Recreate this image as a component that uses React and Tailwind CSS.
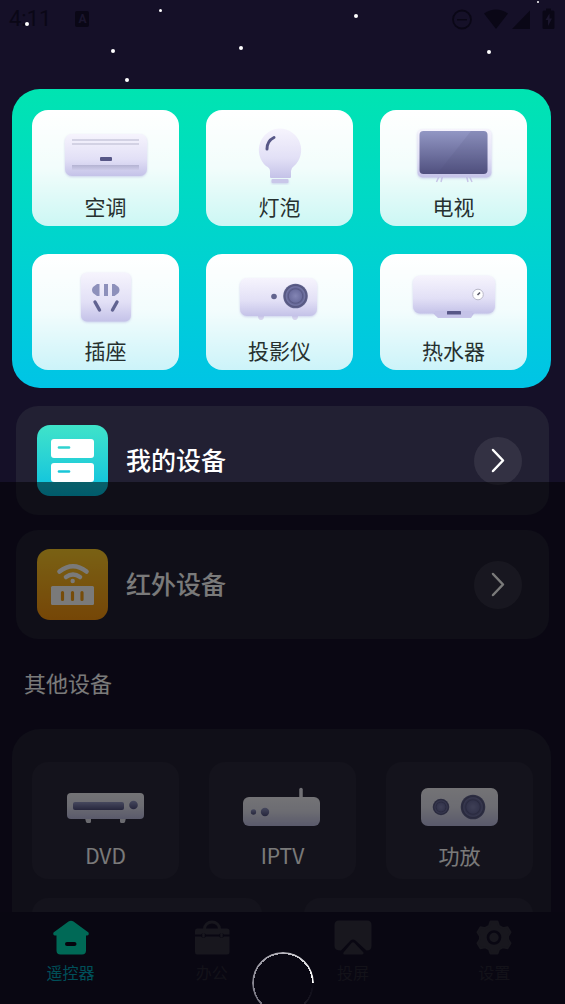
import React from "react";

const stars = [
  "left-[25px] top-[22px] size-1",
  "left-[159px] top-[9px] size-[3px]",
  "left-[111px] top-[49px] size-1",
  "left-[125px] top-[78px] size-1",
  "left-[239px] top-[46px] size-1",
  "left-[354px] top-[14px] size-1",
  "left-[487px] top-[50px] size-1",
  "left-[537px] top-[1px] size-[2px]",
];

function Defs() {
  return (
    <svg className="absolute size-0" aria-hidden="true">
      <defs>
        <linearGradient id="shell" x1="0" y1="0" x2="0" y2="1">
          <stop offset="0" stopColor="#f6f4fd" />
          <stop offset="0.6" stopColor="#e2e0f6" />
          <stop offset="1" stopColor="#c4c2e8" />
        </linearGradient>
        <linearGradient id="chrome" x1="0" y1="0" x2="0" y2="1">
          <stop offset="0" stopColor="#f2f1f6" />
          <stop offset="0.5" stopColor="#e2e2ef" />
          <stop offset="1" stopColor="#bcbce0" />
        </linearGradient>
        <linearGradient id="screen" x1="0" y1="0" x2="0" y2="1">
          <stop offset="0" stopColor="#9297c4" />
          <stop offset="1" stopColor="#50507f" />
        </linearGradient>
        <linearGradient id="vent" x1="0" y1="0" x2="0" y2="1">
          <stop offset="0" stopColor="#b4b3d2" />
          <stop offset="1" stopColor="#cdcbe9" />
        </linearGradient>
        <radialGradient id="lens">
          <stop offset="0" stopColor="#8385b4" />
          <stop offset="0.5" stopColor="#6c6e9f" />
          <stop offset="0.58" stopColor="#585986" />
          <stop offset="0.75" stopColor="#7375a5" />
          <stop offset="0.85" stopColor="#55567f" />
          <stop offset="1" stopColor="#62648f" />
        </radialGradient>
        <filter id="soft" x="-20%" y="-20%" width="140%" height="150%">
          <feDropShadow dx="0" dy="1" stdDeviation="1.2" floodColor="#aaa8dc" floodOpacity="0.5" />
        </filter>
      </defs>
    </svg>
  );
}

const art = {
  ac: (
    <>
      <rect x="33" y="24" width="82" height="42" rx="7" fill="url(#shell)" filter="url(#soft)" />
      <path d="M40 30h67M40 34h67" stroke="#d3d2e4" strokeWidth="2" />
      <rect x="68" y="47" width="12" height="4" rx="1" fill="#575787" />
      <rect x="40" y="55" width="67" height="5" fill="url(#vent)" />
    </>
  ),
  bulb: (
    <>
      <path d="M74 18.500a21.500 21.500 0 0 0-14 37.500q4 2 4 5v6q0 1 1 1h19q1 0 1-1v-6q0-3 3-5a21.500 21.500 0 0 0-14-37.500z" fill="url(#shell)" />
      <rect x="65.500" y="69" width="17" height="4" rx="1" fill="#c9c7e9" filter="url(#soft)" />
      <path d="M61 39q0-8 7-11.500" fill="none" stroke="#575787" strokeWidth="3" strokeLinecap="round" />
    </>
  ),
  tv: (
    <>
      <path d="M60 64l-3.500 8M63 64l-2 8M86 64l2 8M88.500 64l3.500 8" stroke="#c8c6e8" strokeWidth="1.500" />
      <rect x="37.500" y="19" width="74" height="48.500" rx="5" fill="url(#shell)" filter="url(#soft)" />
      <rect x="39.500" y="21" width="68" height="43" rx="4" fill="url(#screen)" />
      <path d="M91 21h12.500a4 4 0 0 1 4 4V60a4 4 0 0 1-4 4H57z" fill="#4a4c70" fillOpacity="0.12" />
    </>
  ),
  socket: (
    <>
      <rect x="49" y="18.500" width="50" height="49" rx="6" fill="url(#shell)" filter="url(#soft)" />
      <path d="M67.500 30v12h-2.500l-4-3q-2-3 0-6l4-3zM80 30v12h2.500l4-3q2-3 0-6l-4-3zM72 30h4v12h-4z" fill="#8d90bb" />
      <path d="M63 48l4.500 8M85 48l-4.500 8" stroke="#616391" strokeWidth="3.400" strokeLinecap="round" />
    </>
  ),
  projector: (
    <>
      <path d="M52 62h6q0 4-3 4t-3-4zM86 62h6q0 4-3 4t-3-4z" fill="#d6d4ee" />
      <rect x="34" y="24" width="77" height="38" rx="7" fill="url(#shell)" filter="url(#soft)" />
      <circle cx="68" cy="42.500" r="2.800" fill="#62648f" />
      <circle cx="89.500" cy="42" r="12.300" fill="url(#lens)" />
    </>
  ),
  heater: (
    <>
      <path d="M52 58h43l-4 6H58z" fill="#c9c7ea" />
      <rect x="33" y="21.500" width="82" height="38" rx="7" fill="url(#shell)" filter="url(#soft)" />
      <path d="M55 57h37v4l-3 2.500H58L55 61z" fill="#c5c3e8" />
      <rect x="67" y="57" width="14" height="3.500" rx="0.500" fill="#575787" />
      <circle cx="98" cy="40.500" r="5.300" fill="#fff" stroke="#b9b8c8" />
      <path d="M97.500 41l2.500-2.500" stroke="#575767" strokeWidth="1.600" />
    </>
  ),
  dvd: (
    <>
      <path d="M53 56h6v3.500q0 1.500-1.500 1.500h-2q-1 0-1.500-1zM88 56h6l-1 4q-.5 1-1.500 1h-2q-1.500 0-1.500-1.500z" fill="#dedde9" />
      <rect x="35" y="31" width="77" height="26" rx="4" fill="url(#chrome)" />
      <rect x="41" y="40" width="51" height="8" rx="2" fill="url(#screen)" />
      <circle cx="101.500" cy="43" r="4.300" fill="url(#screen)" />
    </>
  ),
  iptv: (
    <>
      <path d="M92 38V27.500" stroke="#ecebf4" strokeWidth="3.500" strokeLinecap="round" />
      <rect x="34" y="35" width="77" height="29" rx="6" fill="url(#chrome)" />
      <circle cx="44.500" cy="50" r="2.700" fill="url(#screen)" />
      <circle cx="56" cy="50" r="4.200" fill="url(#screen)" />
    </>
  ),
  amp: (
    <>
      <rect x="35" y="26" width="77" height="38" rx="7" fill="url(#chrome)" />
      <circle cx="55" cy="45" r="8.300" fill="url(#lens)" />
      <circle cx="87" cy="45" r="12.300" fill="url(#lens)" />
    </>
  ),
};

function Art({ name, className }) {
  return (
    <svg viewBox="0 0 147 84" className={className} aria-hidden="true">
      {art[name]}
    </svg>
  );
}

function MainTile({ name, label }) {
  return (
    <button className="flex h-[116px] flex-col items-center rounded-[16px] bg-linear-to-b from-white via-white/95 to-white/80">
      <Art name={name} className="h-[84px] w-[147px]" />
      <span className="text-[21px] leading-6 text-[#26302f]">{label}</span>
    </button>
  );
}

function OtherTile({ name, label }) {
  return (
    <button className="flex h-[117px] flex-col items-center rounded-[16px] bg-white/4">
      <Art name={name} className="h-[84px] w-[147px]" />
      <span className="-mt-1 text-[21px] leading-[26px] text-white">{label}</span>
    </button>
  );
}

function DeviceRow({ label, children }) {
  return (
    <button className="flex h-[109px] w-full items-center rounded-[22px] bg-[#222033] pl-[21px] pr-[27px] text-left">
      {children}
      <span className="ml-[18px] flex-1 pb-1 text-[25px] leading-9 font-medium text-white">{label}</span>
      <span className="flex size-12 items-center justify-center rounded-full bg-white/8">
        <svg viewBox="0 0 48 48" className="size-12" aria-hidden="true">
          <path d="M19 13L29 23.500L19 34" fill="none" stroke="#fff" strokeWidth="2.500" strokeLinecap="round" strokeLinejoin="round" />
        </svg>
      </span>
    </button>
  );
}

function NavItem({ label, active, children }) {
  return (
    <a
      href="#"
      aria-current={active ? "page" : undefined}
      className={
        active
          ? "flex flex-1 flex-col items-center text-[#00a6bb]"
          : "flex flex-1 flex-col items-center text-[#292736]"
      }
    >
      <svg viewBox="0 0 38 36" className="h-9 w-[38px]" aria-hidden="true">
        {children}
      </svg>
      <span className="mt-1 text-[16px] leading-6">{label}</span>
    </a>
  );
}

function StatusBar() {
  return (
    <header className="flex h-[38px] shrink-0 items-center pl-[9px] pr-[10px] text-[#0a0716]">
      <span className="font-['Roboto',sans-serif] text-[22px] leading-6">4:11</span>
      <span className="ml-6 flex h-4 w-[14px] items-center justify-center rounded-[2px] bg-[#0a0716] font-['Roboto',sans-serif] text-[12px] font-bold text-[#1b162e]">
        A
      </span>
      <svg viewBox="0 0 104 24" className="ml-auto h-6 w-[104px]" aria-hidden="true">
        <circle cx="11" cy="12.500" r="9" fill="none" stroke="currentColor" strokeWidth="1.800" />
        <path d="M6 12h10v1.500H6z" fill="currentColor" />
        <path d="M33 6.500q12-8 24 0L45 22z" fill="currentColor" />
        <path d="M61 22h18V3.500z" fill="currentColor" />
        <path d="M95 1.500h5v2h2a1.500 1.500 0 0 1 1.500 1.500v15.500a1.500 1.500 0 0 1-1.500 1.500h-9a1.500 1.500 0 0 1-1.500-1.500V5a1.500 1.500 0 0 1 1.500-1.500h2z" fill="currentColor" />
        <path d="M98.500 6.500l-4 6.500h2.500v6l4-7.500h-2.500z" fill="#1b162e" />
      </svg>
    </header>
  );
}

export default function App() {
  return (
    <div
      lang="zh-CN"
      className="relative flex h-screen flex-col overflow-hidden bg-[#151028] font-['Noto_Sans_CJK_SC','Noto_Sans',sans-serif]"
    >
      <Defs />
      <StatusBar />
      {stars.map((s) => (
        <span key={s} className={`absolute rounded-full bg-white ${s}`} />
      ))}

      <main className="min-h-0 flex-1 overflow-hidden pt-[51px]">
        <section className="ml-3 mr-[14px] grid grid-cols-3 gap-x-[27px] gap-y-7 rounded-[28px] bg-linear-to-b from-[#00e4b1] to-[#00c4e6] pt-[21px] pr-6 pb-[18px] pl-5">
          <MainTile name="ac" label="空调" />
          <MainTile name="bulb" label="灯泡" />
          <MainTile name="tv" label="电视" />
          <MainTile name="socket" label="插座" />
          <MainTile name="projector" label="投影仪" />
          <MainTile name="heater" label="热水器" />
        </section>

        <section className="mt-[18px] ml-4 mr-4 flex flex-col gap-[15px]">
          <DeviceRow label="我的设备">
            <svg viewBox="0 0 71 71" className="size-[71px] rounded-[13px] bg-linear-to-b from-[#3fe3c9] to-[#00bfe0]" aria-hidden="true">
              <rect x="14" y="14" width="43" height="19" rx="3" fill="#fff" />
              <rect x="14" y="38" width="43" height="19" rx="3" fill="#fff" />
              <path d="M22 22.500h10" stroke="#2fd2cf" strokeWidth="2.600" strokeLinecap="round" />
              <path d="M22 46.500h10" stroke="#19c6d8" strokeWidth="2.600" strokeLinecap="round" />
            </svg>
          </DeviceRow>
          <DeviceRow label="红外设备">
            <svg viewBox="0 0 71 71" className="size-[71px] rounded-[13px] bg-linear-to-b from-[#fdcb2a] to-[#f5930f]" aria-hidden="true">
              <g fill="none" stroke="#fff" strokeWidth="4.600" strokeLinecap="round">
                <path d="M22.500 22.500q13.500-10.500 27 0" />
                <path d="M29 28q7-5 14 0" />
              </g>
              <circle cx="35.700" cy="32" r="2.200" fill="#fff" />
              <rect x="14" y="37" width="43" height="19" rx="1.500" fill="#fff" />
              <path d="M25.500 43.500v7M35.500 43.500v7M45 43.500v7" stroke="#f79f16" strokeWidth="3.200" strokeLinecap="round" />
            </svg>
          </DeviceRow>
        </section>

        <h2 className="mt-[26px] ml-6 text-[22px] leading-[34px] text-white">其他设备</h2>

        <section className="mt-[30px] ml-3 mr-[14px] flex flex-col gap-[19px] rounded-[28px] bg-[#222033] pt-[33px] pr-[18px] pb-8 pl-5">
          <div className="grid grid-cols-3 gap-x-[30px]">
            <OtherTile name="dvd" label="DVD" />
            <OtherTile name="iptv" label="IPTV" />
            <OtherTile name="amp" label="功放" />
          </div>
          <div className="grid grid-cols-2 gap-x-[42px]">
            <div className="h-[117px] rounded-[16px] bg-white/4" />
            <div className="h-[117px] rounded-[16px] bg-white/4" />
          </div>
        </section>
      </main>

      <nav className="flex h-[92px] shrink-0 bg-[#130f26] pt-2">
        <NavItem label="遥控器" active>
          <path d="M16.500 1.500q2.500-1.500 5 0L36.500 12.500q1 2.500-1.500 3H34V30.500q0 4-4 4H8.500q-4 0-4-4V15.500H3q-2.500-.5-1.500-3z" fill="#00dcb3" />
          <rect x="13" y="22" width="11.500" height="4" rx="2" fill="#0c081c" />
        </NavItem>
        <NavItem label="办公">
          <g fill="#32303f">
            <path d="M10 9a9 8.500 0 0 1 18 0h-3a6 5.500 0 0 0-12 0z" />
            <path d="M4 8.500h30q2.500 0 2.500 2.500v3.500H31a3 3 0 0 0-5 0H13a3 3 0 0 0-5 0H2V11q0-2.500 2-2.500z" />
            <path d="M2 16.500h6a3 3 0 0 0 5 0h13a3 3 0 0 0 5 0h5.500V32q0 2.500-2.500 2.500H4Q2 34.500 2 32z" />
            <rect x="9.300" y="13" width="2.400" height="4.500" rx="1.200" />
            <rect x="27.300" y="13" width="2.400" height="4.500" rx="1.200" />
          </g>
        </NavItem>
        <NavItem label="投屏">
          <path d="M5 0.500h28q4.500 0 4.500 4.500v21q0 4.500-5 4.500L21.500 20.500q-2.500-2-5 0L7 30.500Q0.500 30.500 0.500 26V5Q0.500 0.500 5 0.500z" fill="#32303f" />
          <path d="M17.500 23q1.500-1.500 3 0l9 9.500q.5 2-1.500 2H11q-2.500 0-1.500-2z" fill="#32303f" />
        </NavItem>
        <NavItem label="设置">
          <path d="M15.500 1.500h7l1.500 4.500 4 2.200 4.500-1 3 5-2.500 4v3l2.500 4-3 5-4.500-1-4 2.200-1.500 4.100h-7l-1.500-4.100-4-2.200-4.500 1-3-5 2.500-4v-3l-2.500-4 3-5 4.500 1 4-2.200z" fill="#32303f" stroke="#32303f" strokeWidth="2" strokeLinejoin="round" />
          <circle cx="19" cy="17.500" r="6" fill="none" stroke="#130f26" strokeWidth="2.600" />
        </NavItem>
      </nav>

      <div className="absolute inset-x-0 top-[482px] bottom-0 bg-black/52" />
      <div
        role="progressbar"
        aria-label="加载中"
        className="absolute -bottom-[10px] left-1/2 size-[62px] -translate-x-1/2 rounded-full bg-[conic-gradient(from_90deg,#0a0814,#24222c_60deg,#5f5d69_110deg,#8a8893_180deg,#b5b3bb_270deg,#ffffff)] [mask-image:radial-gradient(circle,transparent_29px,black_29px)]"
      />
    </div>
  );
}
